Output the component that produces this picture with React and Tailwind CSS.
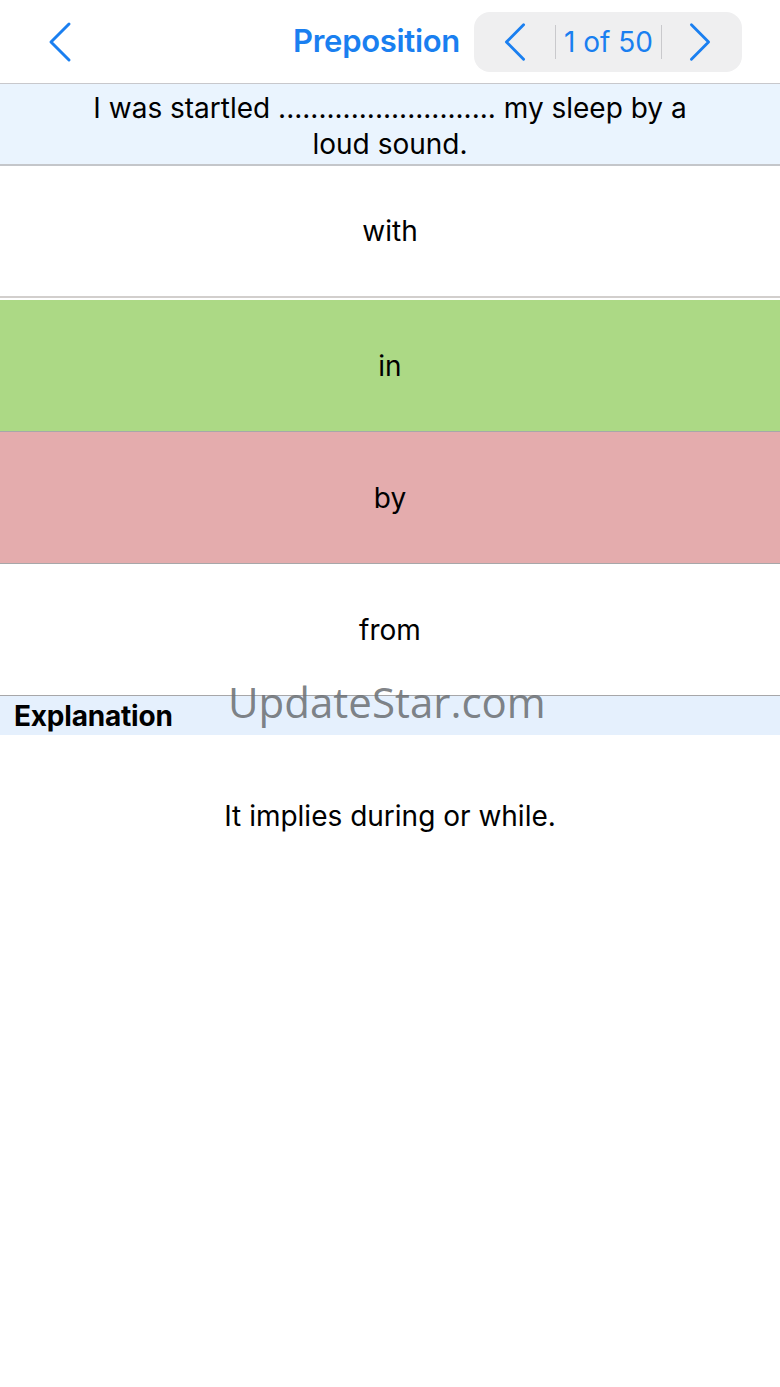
import React from 'react';

const options = [
  { label: 'with', bg: 'bg-white' },
  { label: 'in', bg: 'bg-[#acd985]' },
  { label: 'by', bg: 'bg-[#e4acad]' },
  { label: 'from', bg: 'bg-white' },
];

const Chevron = ({ dir = 'left', className = '' }) => (
  <svg viewBox="0 0 26 42" className={className} fill="none" stroke="#1a7ff0" strokeWidth="3" strokeLinecap="round" strokeLinejoin="round">
    {dir === 'left' ? <path d="M22 3 L4 21 L22 39" /> : <path d="M4 3 L22 21 L4 39" />}
  </svg>
);

export default function App() {
  return (
    <div className="w-[780px] h-[1387px] bg-white relative overflow-hidden" style={{ fontFamily: 'Inter, "Noto Sans", sans-serif' }}>
      {/* Header */}
      <div className="h-[84px] flex items-center border-b border-[#c8c8cc]">
        <div className="pl-[46px] w-[200px]">
          <Chevron dir="left" className="w-[28px] h-[42px]" />
        </div>
        <div className="flex-1 flex items-center justify-end pr-[38px] gap-[14px]">
          <span className="text-[31px] font-semibold text-[#1a7ff0] tracking-[-0.3px]">Preposition</span>
          <div className="h-[60px] w-[268px] bg-[#efeff0] rounded-[16px] flex items-center">
            <div className="w-[81px] flex justify-center">
              <Chevron dir="left" className="w-[26px] h-[40px]" />
            </div>
            <div className="h-[34px] border-l border-[#c9c9cc]" />
            <div className="w-[105px] text-center text-[28px] text-[#1a7ff0]">1 of 50</div>
            <div className="h-[34px] border-l border-[#c9c9cc]" />
            <div className="flex-1 flex justify-center pr-[4px]">
              <Chevron dir="right" className="w-[26px] h-[40px]" />
            </div>
          </div>
        </div>
      </div>

      {/* Question */}
      <div className="h-[82px] bg-[#eaf4fe] border-b-2 border-[#c4c6ca] flex items-center justify-center pt-[3px]">
        <p className="text-[28px] leading-[36px] text-black text-center w-[640px]">
          I was startled ........................... my sleep by a loud sound.
        </p>
      </div>

      {/* Options */}
      <div className="flex flex-col">
        {options.map((o, i) => (
          <div
            key={o.label}
            className={`h-[132px] ${o.bg} ${i === 0 ? 'border-b-2 border-b-[#d2cfcd] mb-[2px]' : 'border-b border-[#a7a7a9]'} flex items-center justify-center text-[28px] text-black`}
          >
            {o.label}
          </div>
        ))}
      </div>

      {/* Explanation header */}
      <div className="h-[39px] bg-[#e5f0fd] flex items-center pl-[14px]">
        <span className="text-[28px] font-bold text-black tracking-[-0.2px]">Explanation</span>
      </div>

      <div className="pt-[60px] text-center text-[28px] text-black">It implies during or while.</div>

      {/* Watermark */}
      <div className="absolute left-[228px] top-[670px] text-[42px] text-[#6f7377]/90" style={{ fontFamily: '"Open Sans", "Noto Sans", sans-serif' }}>
        UpdateStar.com
      </div>
    </div>
  );
}
